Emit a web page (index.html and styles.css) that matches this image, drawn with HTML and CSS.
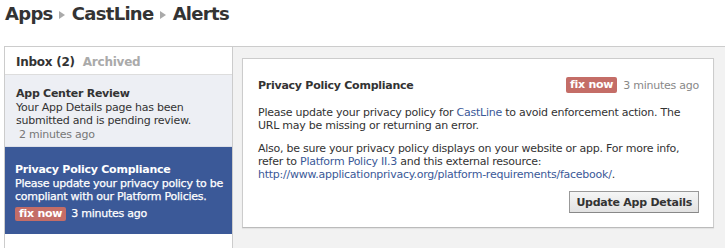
FILE: index.html
```html
<!DOCTYPE html>
<html>
<head>
<meta charset="utf-8">
<link rel="stylesheet" href="styles.css">
</head>
<body>
<h1 class="crumbs">Apps <span class="sep"></span> CastLine <span class="sep"></span> Alerts</h1>
<div class="main">
  <div class="left">
    <div class="tabs"><span class="tab-on">Inbox (2)</span><span class="tab-off">Archived</span></div>
    <div class="item">
      <div class="item-title">App Center Review</div>
      <div class="item-body">Your App Details page has been submitted and is pending review.</div>
      <div class="item-time">2 minutes ago</div>
    </div>
    <div class="item item-sel">
      <div class="item-title">Privacy Policy Compliance</div>
      <div class="item-body">Please update your privacy policy to be compliant with our Platform Policies.</div>
      <div class="item-meta"><span class="badge">fix now</span><span class="meta-time">3 minutes ago</span></div>
    </div>
  </div>
  <div class="right">
    <div class="card">
      <div class="card-head">
        <div class="card-title">Privacy Policy Compliance</div>
        <div class="card-meta"><span class="badge">fix now</span><span class="card-time">3 minutes ago</span></div>
      </div>
      <p class="para">Please update your privacy policy for <a href="#">CastLine</a> to avoid enforcement action. The URL may be missing or returning an error.</p>
      <p class="para">Also, be sure your privacy policy displays on your website or app. For more info, refer to <a href="#">Platform Policy II.3</a> and this external resource: <a href="#">http://www.applicationprivacy.org/platform-requirements/facebook/</a>.</p>
      <div class="actions"><button class="btn">Update App Details</button></div>
    </div>
  </div>
</div>
</body>
</html>
```

FILE: styles.css
```css
* { box-sizing: border-box; }
html, body { margin: 0; padding: 0; background: #fff; }
body {
  font-family: "DejaVu Sans", "Lucida Grande", sans-serif;
  font-size: 11px;
  letter-spacing: -0.25px;
  color: #333;
  width: 728px;
  height: 248px;
  overflow: hidden;
}
.crumbs {
  margin: 0;
  padding: 3px 0 0 5px;
  height: 46px;
  font-size: 18px;
  line-height: 22px;
  font-weight: bold;
  color: #333;
  letter-spacing: -0.7px;
}
.sep {
  display: inline-block;
  width: 0;
  height: 0;
  border-left: 6px solid #aaa;
  border-top: 4px solid transparent;
  border-bottom: 4px solid transparent;
  margin: 0 1px 1px 1px;
  vertical-align: middle;
}
.main {
  display: flex;
  margin-left: 4px;
  width: 721px;
  height: 202px;
  border-top: 1px solid #ccc;
}
.left {
  width: 229px;
  border-left: 1px solid #ccc;
  border-right: 1px solid #ccc;
  background: #fff;
}
.tabs {
  height: 28px;
  padding: 8px 0 0 11px;
  font-size: 12px;
  font-weight: bold;
  border-bottom: 1px solid #ddd;
}
.tab-on { color: #333; margin-right: 8px; }
.tab-off { color: #aaa; }
.item {
  background: #edeff4;
  padding: 12px 2px 5px 11px;
  line-height: 13.5px;
  border-bottom: 1px solid #dde0e8;
}
.item-title { font-weight: bold; }
.item-time { color: #777; padding-left: 3px; }
.item-sel {
  background: #3b5998;
  color: #fff;
  padding: 16px 2px 13px 10px;
  border-bottom: 0;
}
.item-sel .item-title { color: #fff; font-weight: bold; }
.item-sel .item-body { color: #fff; -webkit-text-stroke: 0.25px #fff; }
.item-meta { margin-top: 3px; display: flex; align-items: center; }
.meta-time { color: #fff; margin-left: 5px; -webkit-text-stroke: 0.25px #fff; }
.badge {
  display: inline-block;
  background: #c46d67;
  color: #fff;
  font-weight: bold;
  padding: 0 4px;
  line-height: 14px;
  border-radius: 2px;
}
.right {
  flex: 1;
  background: #f2f2f2;
  padding: 11px 11px 20px 9px;
}
.card {
  height: 170px;
  background: #fff;
  border: 1px solid #ccc;
  border-bottom-color: #bbb;
  box-shadow: 0 1px 1px rgba(0,0,0,0.06);
  padding: 18px 14px 0 15px;
}
.card-head {
  display: flex;
  justify-content: space-between;
  align-items: center;
  margin-bottom: 13px;
}
.card-title { font-weight: bold; }
.card-meta { display: flex; align-items: center; }
.card-meta .badge { line-height: 16px; }
.card-time { color: #888; margin-left: 6px; }
.para {
  margin: 0 0 10px 0;
  line-height: 13px;
}
a { color: #3b5998; text-decoration: none; }
.actions { display: flex; justify-content: flex-end; margin-top: 5px; }
.btn {
  font-family: inherit;
  font-size: 11px;
  font-weight: bold;
  letter-spacing: -0.25px;
  color: #333;
  height: 22px;
  padding: 0 6px;
  border: 1px solid #999;
  border-bottom-color: #888;
  background: linear-gradient(#f5f6f6, #e2e2e2);
  border-radius: 0;
}
```
